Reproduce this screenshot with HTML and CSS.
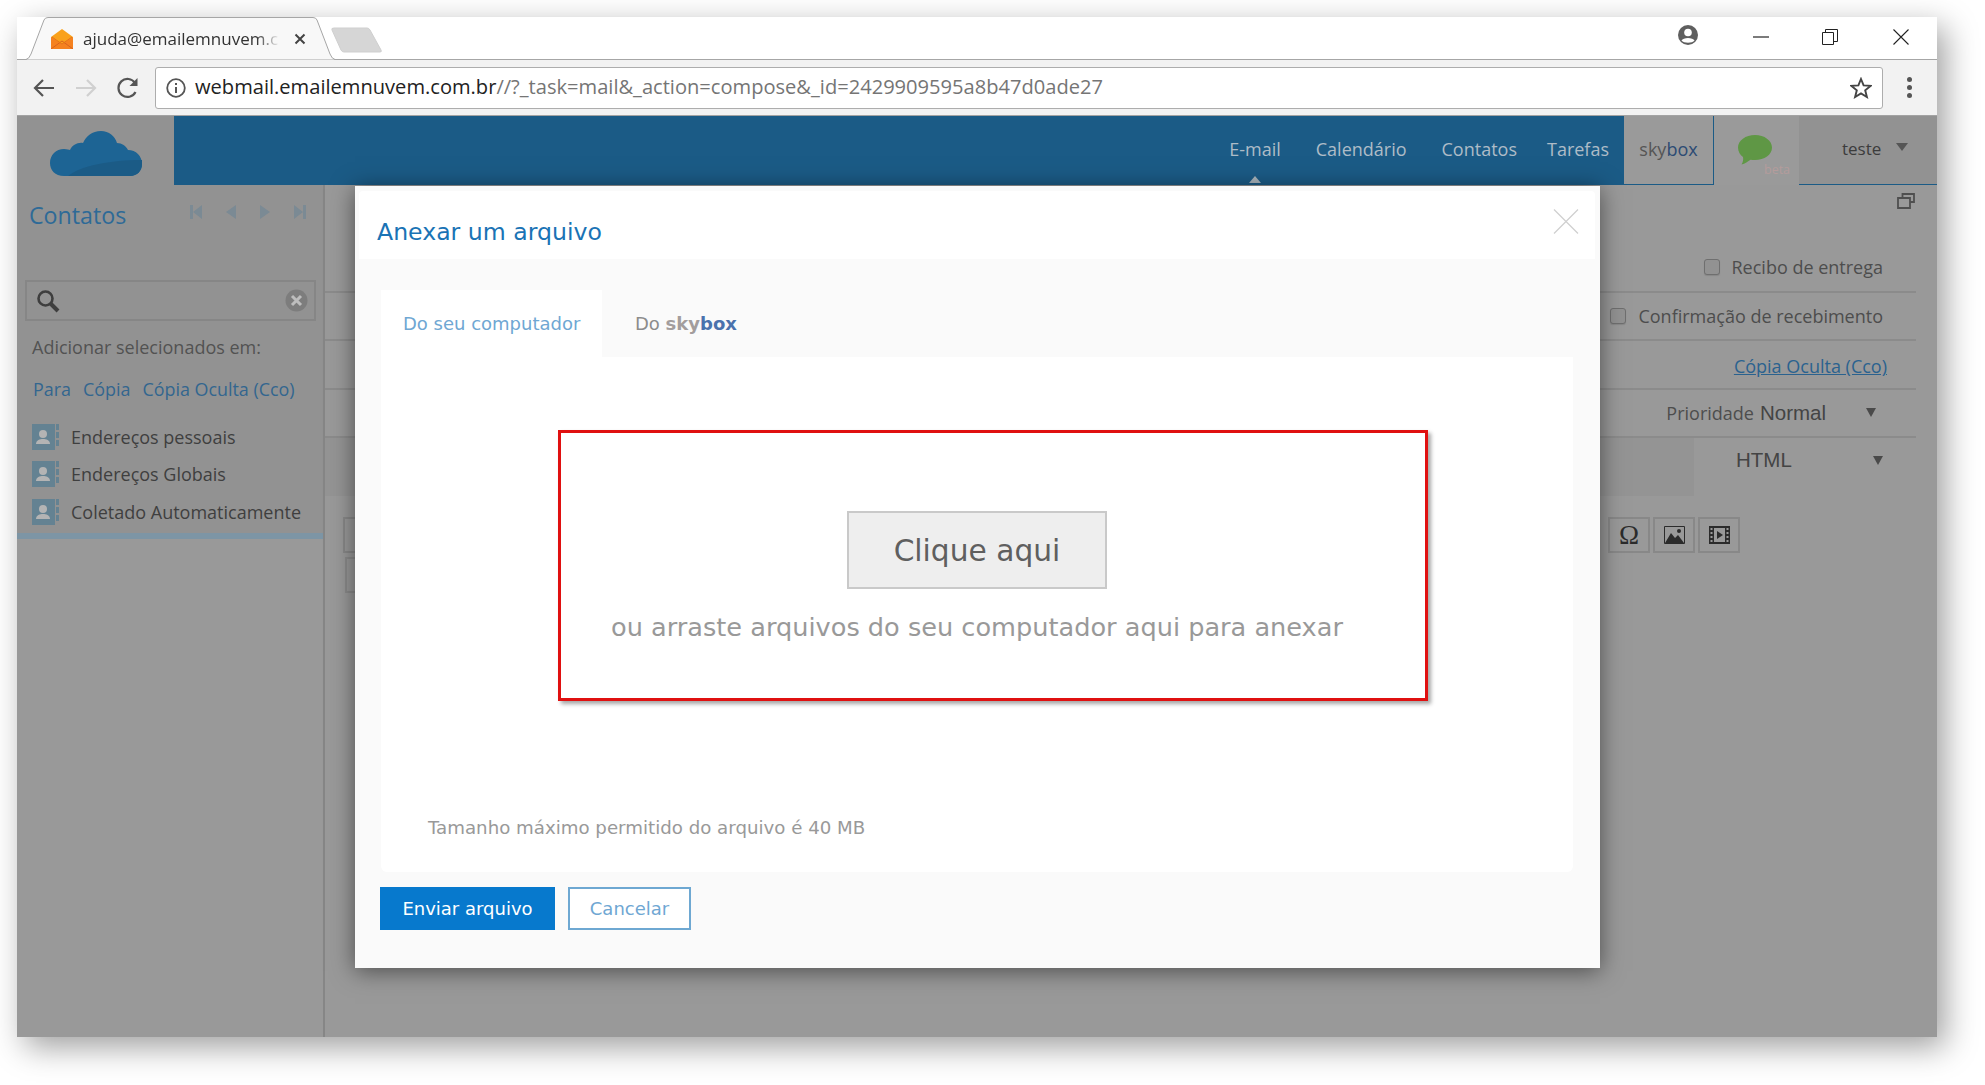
FILE: index.html
```html
<!DOCTYPE html>
<html lang="pt-BR">
<head>
    <meta charset="UTF-8">
    <title>Anexar um arquivo</title>
    <link rel="stylesheet" href="styles.css">
</head>
<body>
<div class="window">
    <!-- tabs -->
    <div class="tabstrip">
        <div class="tab">
            <svg class="tab-shape" width="310" height="43" viewBox="0 0 310 43"><path d="M0 42.5Q3 42 5 37L18 3Q19 .5 22 .5H287Q290 .5 291 3L304 37Q306 42 309 42.5" fill="#f8f8f8" stroke="#a6a6a6"/></svg>
            <svg class="favicon" width="22" height="20" viewBox="0 0 22 20"><path d="M11 0L22 8V20H0V8Z" fill="#f9a11b"/><path d="M0 8L11 15L22 8V20H0Z" fill="#f58220"/><path d="M0 20L11 12L22 20" fill="none" stroke="#d9631e"/><path d="M1 8L11 15L21 8" fill="none" stroke="#e5731a"/></svg>
            <span class="tab-title">ajuda@emailemnuvem.c</span>
            <svg class="tab-close" width="12" height="12" viewBox="0 0 12 12"><path d="M1.5 1.5L10.5 10.5M10.5 1.5L1.5 10.5" stroke="#444" stroke-width="2"/></svg>
        </div>
        <svg class="newtab" width="52" height="26" viewBox="0 0 52 26"><path d="M3 1H36Q38 1 39 3L50 23Q51 25 49 25H13Q11 25 10 23L1 3Q0 1 3 1Z" fill="#d6d6d6" stroke="#cfcfcf"/></svg>
        <div class="win-controls">
            <svg class="ctl-profile" width="20" height="20" viewBox="0 0 20 20"><circle cx="10" cy="10" r="10" fill="#5f5f5f"/><circle cx="10" cy="7.500" r="3.800" fill="#fff"/><path d="M3.500 15.500C5 12 15 12 16.500 15.500C14 18.500 6 18.500 3.500 15.500Z" fill="#fff"/></svg>
            <svg class="ctl-min" width="16" height="16" viewBox="0 0 16 16"><path d="M0 8H16" stroke="#222" stroke-width="1.200"/></svg>
            <svg class="ctl-restore" width="16" height="16" viewBox="0 0 16 16"><path d="M.5 3.500H11.500V15.500H.5ZM3.500 3V.5H15.500V12.500H12" fill="none" stroke="#222"/></svg>
            <svg class="ctl-close" width="16" height="16" viewBox="0 0 16 16"><path d="M.5 .5L15.500 15.500M15.500 .5L.5 15.500" stroke="#222" stroke-width="1.100"/></svg>
        </div>
    </div>

    <!-- address bar -->
    <div class="toolbar">
        <svg class="nav-icon" width="22" height="20" viewBox="0 0 22 20"><path d="M21 10H2M10 2L2 10L10 18" fill="none" stroke="#555" stroke-width="2.200"/></svg>
        <svg class="nav-icon" width="22" height="20" viewBox="0 0 22 20"><path d="M1 10H20M12 2L20 10L12 18" fill="none" stroke="#d0d0d0" stroke-width="2.200"/></svg>
        <svg class="nav-icon" width="22" height="22" viewBox="0 0 22 22"><path d="M18.500 15A9 9 0 1 1 18 6" fill="none" stroke="#555" stroke-width="2.200"/><path d="M20.500 1V9H12.500Z" fill="#555"/></svg>
        <div class="omnibox">
            <svg width="20" height="20" viewBox="0 0 20 20"><circle cx="10" cy="10" r="8.800" fill="none" stroke="#555" stroke-width="1.800"/><path d="M10 9V15M10 5V7" stroke="#555" stroke-width="2"/></svg>
            <span class="url"><b>webmail.emailemnuvem.com.br</b>//?_task=mail&amp;_action=compose&amp;_id=2429909595a8b47d0ade27</span>
            <svg class="star" width="22" height="22" viewBox="0 0 22 22"><path d="M11 2L13.600 8.400L20.500 8.900L15.200 13.300L16.900 20L11 16.400L5.100 20L6.800 13.300L1.500 8.900L8.400 8.400Z" fill="none" stroke="#444" stroke-width="1.900"/></svg>
        </div>
        <div class="dots"><i></i><i></i><i></i></div>
    </div>

    <!-- webmail behind the dialog -->
    <div class="app">
        <header class="app-header">
            <div class="logo-box">
                <svg width="92" height="46" viewBox="0 0 92 46"><path d="M14 45C5 45 0 39 0 32C0 24 6 18 14 18C17 18 19 19 20 19C22 14 28 11 33 12C36 5 42 0 51 0C59 0 65 5 67 12C72 12 76 15 78 19C86 19 92 25 92 33C92 40 87 45 80 45Z" fill="#1d6494"/><path d="M18 45C30 35 60 29 92 29V33C92 40 87 45 80 45Z" fill="#1b5b86"/></svg>
            </div>
            <nav class="main-nav">
                <a class="active">E-mail</a>
                <a>Calendário</a>
                <a>Contatos</a>
                <a class="w-tar">Tarefas</a>
            </nav>
            <div class="skybox-tab"><span class="sky">sky</span><span class="box">box</span></div>
            <div class="chat-tab">
                <svg width="34" height="30" viewBox="0 0 34 30"><path d="M17 0C26.400 0 34 5.500 34 12.500C34 20 26.400 25 17 25C15.500 25 14 25 12.500 24.700C10 26.500 7 28.500 3.500 29.500C5 27 5.500 24.500 5 22C2 19.800 0 16.500 0 12.500C0 5.500 7.600 0 17 0Z" fill="#5f9745"/></svg>
                <span class="beta">beta</span>
            </div>
            <div class="user-tab">teste <span class="caret"></span></div>
        </header>

        <div class="app-body">
            <aside class="sidebar">
                <div class="side-top">
                    <div class="side-head">
                        <h2>Contatos</h2>
                        <div class="pager">
                            <svg width="12" height="14" viewBox="0 0 12 14"><path d="M0 0H3V14H0ZM12 0V14L3 7Z" fill="#7b8a94"/></svg>
                            <svg width="10" height="14" viewBox="0 0 10 14"><path d="M10 0V14L0 7Z" fill="#7b8a94"/></svg>
                            <svg width="10" height="14" viewBox="0 0 10 14"><path d="M0 0V14L10 7Z" fill="#7b8a94"/></svg>
                            <svg width="12" height="14" viewBox="0 0 12 14"><path d="M0 0V14L9 7ZM9 0H12V14H9Z" fill="#7b8a94"/></svg>
                        </div>
                    </div>
                    <div class="searchbox">
                        <svg width="24" height="24" viewBox="0 0 24 24"><circle cx="9.500" cy="9.500" r="7" fill="none" stroke="#3e3e3e" stroke-width="2.600"/><path d="M14.500 14.500L22 22" stroke="#3e3e3e" stroke-width="4"/></svg>
                        <svg class="clear" width="23" height="23" viewBox="0 0 23 23"><circle cx="11.500" cy="11.500" r="11" fill="#7d7d7d"/><path d="M7 7L16 16M16 7L7 16" stroke="#bdbdbd" stroke-width="3"/></svg>
                    </div>
                    <p class="add-label">Adicionar selecionados em:</p>
                    <div class="add-links"><a>Para</a><a>Cópia</a><a>Cópia Oculta (Cco)</a></div>
                    <ul class="books">
                        <li><svg width="28" height="26" viewBox="0 0 28 26"><path d="M0 0H23V26H0Z" fill="#648292"/><path d="M24 0H27V6H24ZM24 8H27V14H24ZM24 16H27V22H24Z" fill="#648292"/><circle cx="11" cy="10" r="4" fill="#b4b4b4"/><path d="M4 20C4 16 8 15 11 15S18 16 18 20Z" fill="#b4b4b4"/></svg>Endereços pessoais</li>
                        <li><svg width="28" height="26" viewBox="0 0 28 26"><path d="M0 0H23V26H0Z" fill="#648292"/><path d="M24 0H27V6H24ZM24 8H27V14H24ZM24 16H27V22H24Z" fill="#648292"/><circle cx="11" cy="10" r="4" fill="#b4b4b4"/><path d="M4 20C4 16 8 15 11 15S18 16 18 20Z" fill="#b4b4b4"/></svg>Endereços Globais</li>
                        <li><svg width="28" height="26" viewBox="0 0 28 26"><path d="M0 0H23V26H0Z" fill="#648292"/><path d="M24 0H27V6H24ZM24 8H27V14H24ZM24 16H27V22H24Z" fill="#648292"/><circle cx="11" cy="10" r="4" fill="#b4b4b4"/><path d="M4 20C4 16 8 15 11 15S18 16 18 20Z" fill="#b4b4b4"/></svg>Coletado Automaticamente</li>
                    </ul>
                </div>
            </aside>

            <main class="compose">
                <div class="compose-top">
                    <svg width="18" height="16" viewBox="0 0 18 16"><path d="M5.500 4.500V1H17V9H13M1 5H13V15H1Z" fill="none" stroke="#4f4f4f" stroke-width="1.800"/></svg>
                </div>
                <div class="row"><span class="check"></span>Recibo de entrega</div>
                <div class="row"><span class="check"></span>Confirmação de recebimento</div>
                <div class="row row-link"><a>Cópia Oculta (Cco)</a></div>
                <div class="row row-select"><span class="label">Prioridade</span><span class="select-val">Normal</span><span class="tri"></span></div>
                <div class="format-row">
                    <div class="format-fill"></div>
                    <div class="format-select"><span class="select-val">HTML</span><span class="tri"></span></div>
                </div>
                <div class="editor-tools">
                    <span class="tool tool-first"></span>
                    <span class="tool"><span class="omega">Ω</span></span>
                    <span class="tool"><svg width="21" height="18" viewBox="0 0 21 18"><path d="M.5 .5H20.500V17.500H.5Z" fill="none" stroke="#2b2b2b"/><path d="M1 17L7 7L11 12L14 9L20 17Z" fill="#2b2b2b"/><circle cx="15" cy="5" r="2" fill="#2b2b2b"/></svg></span>
                    <span class="tool"><svg width="21" height="18" viewBox="0 0 21 18"><path d="M0 0H21V18H0Z" fill="#2b2b2b"/><path d="M5 2H16V16H5ZM1.500 2H3.500V4H1.500ZM1.500 6H3.500V8H1.500ZM1.500 10H3.500V12H1.500ZM1.500 14H3.500V16H1.500ZM17.500 2H19.500V4H17.500ZM17.500 6H19.500V8H17.500ZM17.500 10H19.500V12H17.500ZM17.500 14H19.500V16H17.500Z" fill="#999"/><path d="M8 5V13L14 9Z" fill="#2b2b2b"/></svg></span>
                </div>
                <div class="editor-area"></div>
            </main>
        </div>
    </div>

    <!-- dialog -->
    <div class="dialog">
        <div class="dialog-head">
            <h1>Anexar um arquivo</h1>
            <svg class="dialog-close" width="26" height="25" viewBox="0 0 26 25"><path d="M1 .5L25 24.500M25 .5L1 24.500" stroke="#cfcfcf" stroke-width="1.200"/></svg>
        </div>
        <div class="dialog-tabs">
            <a class="dtab current">Do seu computador</a>
            <a class="dtab">Do <b class="sky">sky</b><b class="box">box</b></a>
        </div>
        <div class="panel">
            <div class="dropzone">
                <button class="pick">Clique aqui</button>
                <p class="drop-text">ou arraste arquivos do seu computador aqui para anexar</p>
            </div>
            <p class="max-size">Tamanho máximo permitido do arquivo é 40 MB</p>
        </div>
        <div class="dialog-foot">
            <button class="send">Enviar arquivo</button>
            <button class="cancel">Cancelar</button>
        </div>
    </div>
</div>
</body>
</html>
```

FILE: styles.css
```css
* {
    margin: 0;
    padding: 0;
    box-sizing: border-box;
}
html, body { height: 100%; }
body {
    background: #fff;
    padding: 17px 0 0 17px;
    font-family: "Open Sans", sans-serif;
    overflow: hidden;
}
a { cursor: pointer; }

.window {
    position: relative;
    width: 1920px;
    height: 1020px;
    display: flex;
    flex-direction: column;
    box-shadow: 8px 10px 30px rgba(0, 0, 0, 0.38);
    background: #999;
}

/* browser tabs */
.tabstrip {
    height: 43px;
    background: #fff;
    border-bottom: 1px solid #a6a6a6;
    display: flex;
    flex-shrink: 0;
}
.tab {
    position: relative;
    width: 310px;
    height: 43px;
    margin-left: 9px;
    display: flex;
    align-items: center;
    padding: 0 0 0 25px;
}
.tab-shape { position: absolute; left: 0; top: 0; }
.favicon, .tab-title, .tab-close { position: relative; }
.tab-title {
    width: 197px;
    margin-left: 10px;
    font-size: 17px;
    color: #333;
    white-space: nowrap;
    -webkit-mask-image: linear-gradient(to right, #000 88%, transparent);
    mask-image: linear-gradient(to right, #000 88%, transparent);
}
.tab-close { margin-left: 14px; }
.newtab { margin: 10px 0 0 -5px; }
.win-controls {
    flex: 1;
    display: flex;
    justify-content: flex-end;
    align-items: flex-start;
    padding-right: 28px;
}
.ctl-profile { margin-top: 8px; }
.ctl-min { margin: 12px 0 0 55px; }
.ctl-restore { margin: 12px 0 0 53px; }
.ctl-close { margin: 12px 0 0 55px; }

/* address bar */
.toolbar {
    height: 56px;
    background: #f2f2f2;
    border-bottom: 1px solid #a3a3a3;
    display: flex;
    align-items: center;
    padding: 0 0 0 16px;
    flex-shrink: 0;
}
.nav-icon { margin-right: 20px; }
.omnibox {
    width: 1728px;
    height: 42px;
    margin: 0 0 0 -4px;
    background: #fff;
    border: 1px solid #adadad;
    border-radius: 3px;
    display: flex;
    align-items: center;
    padding: 0 10px 0 10px;
}
.url {
    margin-left: 9px;
    font-size: 20.100px;
    color: #757575;
    white-space: nowrap;
    margin-top: -2px;
}
.url b { font-weight: 400; color: #222; }
.star { margin-left: auto; }
.dots {
    margin-left: 24px;
    display: flex;
    flex-direction: column;
    gap: 3px;
}
.dots i {
    width: 5px;
    height: 5px;
    border-radius: 50%;
    background: #555;
}

/* webmail */
.app {
    flex: 1;
    display: flex;
    flex-direction: column;
    min-height: 0;
}
.app-header {
    height: 69px;
    display: flex;
    flex-shrink: 0;
}
.logo-box {
    width: 157px;
    background: #929292;
    padding: 15px 0 0 33px;
}
.main-nav {
    flex: 1;
    background: #1b5b86;
    display: flex;
    justify-content: flex-end;
    align-items: center;
    padding: 0 15px 3px 0;
}
.main-nav a {
    position: relative;
    font-size: 18px;
    color: #aebcc7;
    margin-left: 35px;
}
.main-nav a.w-tar { margin-left: 30px; }
.main-nav a.active::after {
    content: "";
    position: absolute;
    left: 50%;
    margin-left: -6px;
    bottom: -22px;
    border: 6px solid transparent;
    border-top: 0;
    border-bottom: 7px solid #a9b5bd;
}
.skybox-tab {
    width: 90px;
    background: #9a9a9a;
    border-right: 1px solid #1b5b86;
    border-bottom: 1px solid #1b5b86;
    display: flex;
    align-items: center;
    justify-content: center;
    padding-bottom: 3px;
    font-size: 18px;
}
.sky { color: #555; }
.box { color: #2c4b74; }
.chat-tab {
    position: relative;
    width: 85px;
    background: #9a9a9a;
    padding: 19px 0 0 24px;
}
.beta {
    position: absolute;
    left: 50px;
    top: 45px;
    font-size: 12.500px;
    color: #b49c9c;
}
.user-tab {
    width: 138px;
    background: #929292;
    border-bottom: 1px solid #1b5b86;
    display: flex;
    align-items: center;
    padding: 0 0 3px 43px;
    font-size: 17px;
    color: #3c3c3c;
    gap: 15px;
}
.caret {
    border: 6px solid transparent;
    border-bottom: 0;
    border-top: 8px solid #555;
    margin-top: -4px;
}

.app-body {
    flex: 1;
    display: flex;
    min-height: 0;
}
.sidebar {
    width: 308px;
    background: #999;
    border-right: 2px solid #868686;
}
.side-top {
    background: #929292;
    height: 354px;
    border-bottom: 6px solid #7d95a5;
    padding: 0 8px;
}
.side-head {
    height: 95px;
    display: flex;
    padding: 12px 0 0 4px;
}
.side-head h2 {
    font-size: 23.200px;
    font-weight: 400;
    color: #2e6a97;
    line-height: 36px;
}
.pager {
    margin-left: auto;
    width: 116px;
    height: 14px;
    margin-top: 8px;
    margin-right: 9px;
    display: flex;
    justify-content: space-between;
}
.searchbox {
    height: 41px;
    width: 291px;
    border: 2px solid #868686;
    display: flex;
    align-items: center;
    justify-content: space-between;
    padding: 0 6px 0 9px;
}
.add-label {
    margin: 14px 0 0 7px;
    font-size: 18px;
    line-height: 24px;
    color: #525252;
}
.add-links {
    margin: 18px 0 0 8px;
    display: flex;
    gap: 12px;
    font-size: 17.900px;
    line-height: 24px;
    color: #33668f;
}
.books {
    list-style: none;
    margin: 17px 0 0 7px;
}
.books li {
    height: 37.500px;
    display: flex;
    align-items: center;
    gap: 11px;
    font-size: 18px;
    color: #3f3f3f;
}

.compose {
    flex: 1;
    min-width: 0;
    background: #999;
    padding-right: 21px;
}
.compose-top {
    height: 59px;
    padding: 7px 0 0 0;
    margin-right: -5px;
    text-align: right;
}
.compose-top svg { margin-right: 6px; }
.row {
    height: 48.500px;
    border-bottom: 2px solid #8b8b8b;
    display: flex;
    align-items: center;
    justify-content: flex-end;
    padding-right: 33px;
    font-size: 18px;
    color: #4d4d4d;
}
.check {
    width: 16px;
    height: 16px;
    margin-right: 12px;
    background: #929292;
    border: 1.500px solid #6f6f6f;
    border-radius: 3px;
    box-shadow: 0 1px 1px #888;
}
.row-link a {
    color: #2a628f;
    text-decoration: underline;
    margin: 4px -4px 0 0;
}
.row-select { padding-right: 40px; }
.select-val {
    font-family: "Liberation Sans", sans-serif;
    font-size: 20.500px;
    color: #444;
    margin-left: 6px;
}
.tri {
    margin-left: 40px;
    border: 5px solid transparent;
    border-bottom: 0;
    border-top: 9px solid #4a4a4a;
}
.format-row {
    display: flex;
    height: 58px;
}
.format-fill {
    width: 1369px;
    background: #949494;
}
.format-select {
    flex: 1;
    display: flex;
    align-items: center;
    padding: 0 0 14px 36px;
}
.format-select .tri { margin-left: 81px; }
.editor-tools {
    display: flex;
    gap: 3px;
    padding: 21px 0 0 18px;
}
.tool {
    width: 42px;
    height: 36px;
    border: 2px solid #888;
    display: flex;
    align-items: center;
    justify-content: center;
}
.tool-first { margin-right: 1220px; }
.omega {
    font-family: "Liberation Serif", serif;
    font-size: 27px;
    color: #2b2b2b;
    line-height: 1;
}
.editor-area {
    margin: 4px 0 0 20px;
    width: 40px;
    height: 36px;
    border: 2px solid #8b8b8b;
}

/* dialog */
.dialog {
    position: absolute;
    left: 338px;
    top: 169px;
    width: 1245px;
    height: 782px;
    background: #fafafa;
    box-shadow: 0 3px 22px rgba(0, 0, 0, 0.5);
    display: flex;
    flex-direction: column;
    font-family: "DejaVu Sans", sans-serif;
}
.dialog-head {
    position: relative;
    height: 68px;
    margin: 5px 5px 0 4px;
    background: #fff;
    border-radius: 4px 4px 0 0;
    padding: 28px 0 0 18px;
}
.dialog-head h1 {
    font-size: 23.600px;
    font-weight: 400;
    line-height: 26px;
    color: #1a73b5;
}
.dialog-close {
    position: absolute;
    right: 16px;
    top: 18px;
}
.dialog-tabs {
    display: flex;
    margin: 31px 0 0 26px;
    height: 67px;
}
.dtab {
    width: 221px;
    padding: 23px 0 0 22px;
    font-size: 18px;
    line-height: 22px;
    color: #8c8c8c;
    background: #fafafa;
}
.dtab b.sky { color: #a39d9d; }
.dtab b.box { color: #4a72ad; }
.dtab.current {
    background: #fff;
    color: #6fa7d3;
}
.dtab + .dtab { padding-left: 33px; }
.panel {
    margin: 0 27px 0 26px;
    height: 515px;
    background: #fff;
    border-radius: 0 0 6px 6px;
    padding: 73px 0 0 177px;
}
.dropzone {
    width: 870px;
    height: 271px;
    border: 3px solid #e01010;
    box-shadow: 3px 3px 4px rgba(0, 0, 0, 0.35);
    display: flex;
    flex-direction: column;
    align-items: center;
    padding-top: 78px;
    padding-right: 32px;
}
.pick {
    width: 260px;
    height: 78px;
    background: #eee;
    border: 2px solid #c9c9c9;
    font-family: inherit;
    font-size: 29.700px;
    color: #5f5f5f;
    cursor: pointer;
}
.drop-text {
    margin-top: 22px;
    font-size: 25.600px;
    line-height: 32px;
    color: #999;
    white-space: nowrap;
}
.max-size {
    margin: 116px 0 0 -130px;
    font-size: 18.200px;
    line-height: 22px;
    color: #999;
}
.dialog-foot {
    display: flex;
    gap: 13px;
    margin: 15px 0 0 25px;
}
.dialog-foot button {
    height: 43px;
    font-family: inherit;
    font-size: 18px;
    cursor: pointer;
}
.send {
    width: 175px;
    background: #0779cd;
    border: none;
    color: #fff;
}
.cancel {
    width: 123px;
    background: #fff;
    border: 2px solid #6ea8d2;
    color: #6fa7d3;
}
```
